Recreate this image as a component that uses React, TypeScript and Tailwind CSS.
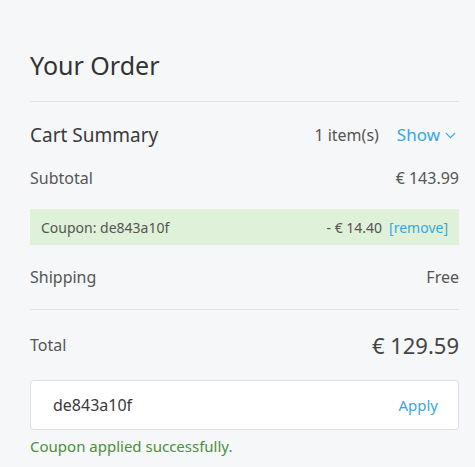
import { ChevronDown } from "lucide-react";

export default function App() {
  return (
    <div
      className="h-[467px] w-full overflow-hidden bg-[#f6f7f9] pl-[30px] pr-[16px] pt-[47px] text-[#3a3a3a]"
      style={{ fontFamily: "'Noto Sans', Lato, sans-serif" }}
    >
      <h1 className="text-[25px] leading-[36px] font-normal text-[#333]">Your Order</h1>

      <div className="mt-[18px] h-px bg-[#dfe1e4]" />

      <div className="mt-[20px] flex h-[26px] items-center justify-between">
        <span className="text-[19px] text-[#3a3a3a]">Cart Summary</span>
        <div className="flex items-center gap-[18px]">
          <span className="text-[16px] text-[#555]">1 item(s)</span>
          <button className="flex items-center gap-[2px] text-[17px] text-[#35a9e1]">
            Show
            <ChevronDown size={17} strokeWidth={1.75} />
          </button>
        </div>
      </div>

      <div className="mt-[18px] flex h-[24px] items-center justify-between text-[16px] text-[#555]">
        <span>Subtotal</span>
        <span>€ 143.99</span>
      </div>

      <div className="mt-[19px] flex h-[36px] items-center justify-between bg-[#dff1d8] px-[11px] text-[14px] text-[#555]">
        <span>Coupon: de843a10f</span>
        <div className="flex items-center gap-[7px]">
          <span>- € 14.40</span>
          <button className="text-[#35a9e1]">[remove]</button>
        </div>
      </div>

      <div className="mt-[20px] flex h-[24px] items-center justify-between text-[16px] text-[#555]">
        <span>Shipping</span>
        <span>Free</span>
      </div>

      <div className="mt-[20px] h-px bg-[#dfe1e4]" />

      <div className="mt-[20px] flex h-[30px] items-center justify-between">
        <span className="text-[16px] text-[#555]">Total</span>
        <span className="text-[22px] text-[#444]">€ 129.59</span>
      </div>

      <div className="mt-[20px] flex h-[50px] items-center justify-between rounded-[4px] border border-[#dcdfe3] bg-white pl-[22px] pr-[20px]">
        <span className="text-[16px] text-[#3a3a3a]">de843a10f</span>
        <button className="text-[15px] text-[#35a9e1]">Apply</button>
      </div>

      <p className="mt-[6px] text-[15px] leading-[20px] text-[#4c8f3c]">Coupon applied successfully.</p>
    </div>
  );
}
